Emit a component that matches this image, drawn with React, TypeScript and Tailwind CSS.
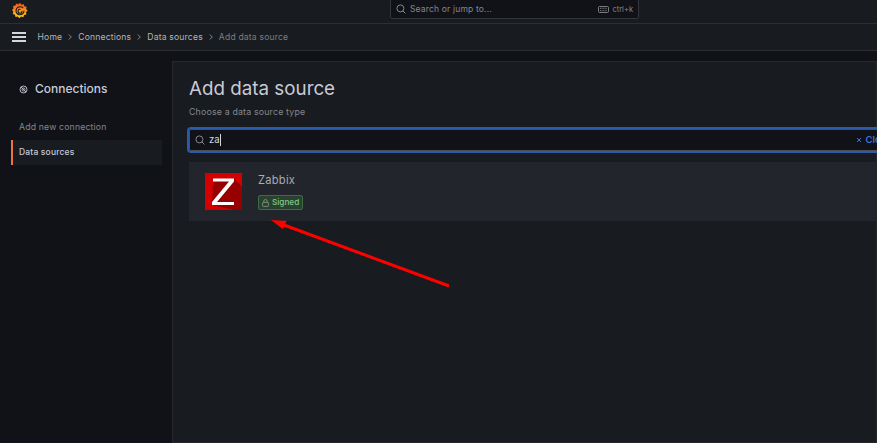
import React from "react";

function GrafanaLogo() {
  return (
    <svg width="16" height="17" viewBox="0 0 16 17">
      <defs>
        <linearGradient id="g" x1="0" y1="1" x2="0" y2="0">
          <stop offset="0" stopColor="#fcd01e" />
          <stop offset="1" stopColor="#f0501e" />
        </linearGradient>
      </defs>
      <path
        d="M8 .8l1.500 1.900 2.200-.7.600 2.200 2.300.6-.5 2.200L15.600 8.600l-1.600 1.600.4 2.300-2.300.5-.8 2.200-2.200-.6L7.300 16.200 5.800 14.500l-2.200.5-.7-2.200-2.200-.8.600-2.200L0 8.100l1.500-1.700-.4-2.300 2.300-.5.800-2.100 2.200.7z"
        fill="url(#g)"
      />
      <path
        d="M12 9A4 4 0 1 1 8.500 4.800c1 0 1.700.3 2.300.8M10 9.200A2 2 0 1 1 8 7.200"
        fill="none"
        stroke="#17191e"
        strokeWidth="1.100"
        strokeLinecap="round"
      />
    </svg>
  );
}

function SearchIcon({ className }: { className: string }) {
  return (
    <svg className={className} viewBox="0 0 12 12" fill="none" stroke="currentColor" strokeWidth="1">
      <circle cx="5.300" cy="5.300" r="4.200" />
      <path d="M8.400 8.400L11 11" strokeLinecap="round" />
    </svg>
  );
}

function Chevron() {
  return (
    <svg className="mx-[4px] w-[8px] h-[8px] text-[#85878c]" viewBox="0 0 8 8" fill="none" stroke="currentColor" strokeWidth="1">
      <path d="M2.800 1.500L5.300 4L2.800 6.500" />
    </svg>
  );
}

function ZabbixLogo() {
  return (
    <svg width="37" height="37" viewBox="0 0 37 37" className="shrink-0">
      <rect width="37" height="37" fill="#d40000" />
      <path d="M8 9L29 5L37 14V37H29L7 32Z" fill="#960000" />
      <path d="M8 5.500H29V8.500L12 29H29V32H7V29L24 8.500H8Z" fill="#fff" />
    </svg>
  );
}

export default function App() {
  return (
    <div
      className="relative w-[877px] h-[443px] overflow-hidden flex flex-col bg-[#111217] text-[#ccccdc]"
      style={{ fontFamily: "Inter, 'Liberation Sans', sans-serif" }}
    >
      <header className="h-[24px] shrink-0 flex bg-[#181b1f] border-b border-[#2b2e33] pl-[12px]">
        <div className="mt-[2px] w-[378px] shrink-0">
          <GrafanaLogo />
        </div>
        <div className="w-[249px] h-[20px] -mt-px flex items-center bg-[#111217] border border-[#33363b] rounded-[2px] pl-[5px] pr-[5px]">
          <SearchIcon className="w-[10px] h-[10px] text-[#9a9ca1]" />
          <span className="ml-[4px] text-[8.500px] tracking-[0.020em] text-[#85878c]">Search or jump to...</span>
          <span className="ml-auto flex items-center gap-[3px] text-[7.500px] text-[#85878c] mt-[1px]">
            <svg width="11" height="7" viewBox="0 0 11 7" fill="none" stroke="currentColor" strokeWidth="0.900">
              <rect x=".5" y=".5" width="10" height="6" rx="1" />
              <path d="M2 2.300h7M2 4.700h7" strokeDasharray="1 .6" />
            </svg>
            ctrl+k
          </span>
        </div>
      </header>

      <nav className="h-[27px] shrink-0 flex items-center bg-[#181b1f] border-b border-[#2b2e33] pl-[12px] text-[8.600px] tracking-[0.020em]">
        <div className="w-[14px] flex flex-col gap-[2.500px] mr-[11.500px]">
          <span className="h-[1.500px] bg-[#d5d6dc]" />
          <span className="h-[1.500px] bg-[#d5d6dc]" />
          <span className="h-[1.500px] bg-[#d5d6dc]" />
        </div>
        <span className="text-[#b4b6bb]">Home</span>
        <Chevron />
        <span className="text-[#b4b6bb]">Connections</span>
        <Chevron />
        <span className="text-[#b4b6bb]">Data sources</span>
        <Chevron />
        <span className="text-[#7c7e83]">Add data source</span>
      </nav>

      <div className="flex-1 flex min-h-0">
        <aside className="w-[172px] shrink-0 pl-[11px] pt-[29px]">
          <div className="flex items-center pl-[8px] h-[18px]">
            <svg width="9" height="9" viewBox="0 0 9 9" fill="none" stroke="#c8c9d0" strokeWidth="0.900">
              <circle cx="4.500" cy="4.500" r="3.500" />
              <circle cx="4.500" cy="4.500" r="1.500" />
              <path d="M2 2l5 5" />
            </svg>
            <span className="ml-[7px] text-[12px] font-medium text-[#c8cad6]">Connections</span>
          </div>
          <div className="mt-[22px] pl-[8px] h-[16px] flex items-center text-[8.700px] tracking-[0.020em] text-[#85878c]">
            Add new connection
          </div>
          <div className="mt-[4px] w-[151px] h-[25px] flex items-center bg-[#181b1f] border-l-2 border-[#f2733a] pl-[6px] text-[8.500px] font-medium tracking-[0.020em] text-[#c8cad6]">
            Data sources
          </div>
        </aside>

        <main className="mt-[10px] flex-1 min-w-0 bg-[#181b1f] border border-[#25282d] pl-[16px] pt-[14px]">
          <h1 className="text-[18.800px] leading-[26px] text-[#c8cad6]">Add data source</h1>
          <p className="mt-[4px] text-[8.800px] leading-[12px] tracking-[0.020em] text-[#85878c]">Choose a data source type</p>
          <div className="mt-[11px] w-[720px] h-[22px] flex items-center bg-[#111217] border border-[#4d4f54] rounded-[2px] pl-[5px] outline-2 outline-[#2c5aa8]">
            <SearchIcon className="w-[10px] h-[10px] text-[#9a9ca1]" />
            <span className="ml-[4px] text-[9.500px] text-[#d5d6dc]">za</span>
            <span className="w-px h-[12px] bg-[#d5d6dc]" />
            <span className="ml-[635px] flex items-center text-[9.500px] font-semibold text-[#3d71d9] whitespace-nowrap">
              <svg width="6" height="6" viewBox="0 0 6 6" stroke="currentColor" strokeWidth="1" className="mr-[4px]">
                <path d="M1 1l4 4M5 1L1 5" />
              </svg>
              Clear
            </span>
          </div>
          <div className="mt-[11px] w-[720px] h-[59px] flex items-center bg-[#22252b] pl-[16px]">
            <ZabbixLogo />
            <div className="ml-[16px] flex flex-col items-start">
              <span className="text-[11.200px] leading-[14px] tracking-[0.020em] text-[#a9abb8]">Zabbix</span>
              <span className="mt-[8px] h-[15px] px-[3px] flex items-center gap-[3px] rounded-[2px] bg-[#29412f] border border-[#3d6b45] text-[8.200px] font-medium text-[#7fc98a]">
                <svg width="7" height="8" viewBox="0 0 7 8" fill="none" stroke="#8fa092" strokeWidth="0.800">
                  <rect x=".6" y="3.400" width="5.800" height="4" rx=".7" />
                  <path d="M1.800 3.400V2.200a1.700 1.700 0 0 1 3.400 0v1.200" />
                </svg>
                Signed
              </span>
            </div>
          </div>
        </main>
      </div>

      <svg className="absolute left-[268px] top-[216px] pointer-events-none" width="184" height="74" viewBox="0 0 184 74" fill="none">
        <path d="M181 70L16 9" stroke="#ff0000" strokeWidth="3" />
        <path d="M3 4L18.700 5L14.700 13Z" fill="#ff0000" />
      </svg>
    </div>
  );
}
